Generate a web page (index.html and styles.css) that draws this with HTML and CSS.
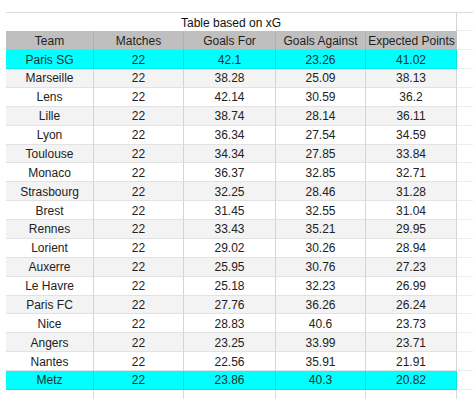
FILE: index.html
```html
<!DOCTYPE html>
<html>
<head>
<meta charset="utf-8">
<link rel="stylesheet" href="styles.css">
</head>
<body>
<div class="sheet">
  <div class="c title">Table based on xG</div><div class="c x top"></div>

  <div class="c h">Team</div><div class="c h">Matches</div><div class="c h">Goals For</div><div class="c h">Goals Against</div><div class="c h">Expected Points</div><div class="c x"></div>

  <div class="c hl">Paris SG</div><div class="c hl">22</div><div class="c hl">42.1</div><div class="c hl">23.26</div><div class="c hl">41.02</div><div class="c x"></div>
  <div class="c alt">Marseille</div><div class="c alt">22</div><div class="c alt">38.28</div><div class="c alt">25.09</div><div class="c alt">38.13</div><div class="c x"></div>
  <div class="c">Lens</div><div class="c">22</div><div class="c">42.14</div><div class="c">30.59</div><div class="c">36.2</div><div class="c x"></div>
  <div class="c alt">Lille</div><div class="c alt">22</div><div class="c alt">38.74</div><div class="c alt">28.14</div><div class="c alt">36.11</div><div class="c x"></div>
  <div class="c">Lyon</div><div class="c">22</div><div class="c">36.34</div><div class="c">27.54</div><div class="c">34.59</div><div class="c x"></div>
  <div class="c alt">Toulouse</div><div class="c alt">22</div><div class="c alt">34.34</div><div class="c alt">27.85</div><div class="c alt">33.84</div><div class="c x"></div>
  <div class="c">Monaco</div><div class="c">22</div><div class="c">36.37</div><div class="c">32.85</div><div class="c">32.71</div><div class="c x"></div>
  <div class="c alt">Strasbourg</div><div class="c alt">22</div><div class="c alt">32.25</div><div class="c alt">28.46</div><div class="c alt">31.28</div><div class="c x"></div>
  <div class="c">Brest</div><div class="c">22</div><div class="c">31.45</div><div class="c">32.55</div><div class="c">31.04</div><div class="c x"></div>
  <div class="c alt">Rennes</div><div class="c alt">22</div><div class="c alt">33.43</div><div class="c alt">35.21</div><div class="c alt">29.95</div><div class="c x"></div>
  <div class="c">Lorient</div><div class="c">22</div><div class="c">29.02</div><div class="c">30.26</div><div class="c">28.94</div><div class="c x"></div>
  <div class="c alt">Auxerre</div><div class="c alt">22</div><div class="c alt">25.95</div><div class="c alt">30.76</div><div class="c alt">27.23</div><div class="c x"></div>
  <div class="c">Le Havre</div><div class="c">22</div><div class="c">25.18</div><div class="c">32.23</div><div class="c">26.99</div><div class="c x"></div>
  <div class="c alt">Paris FC</div><div class="c alt">22</div><div class="c alt">27.76</div><div class="c alt">36.26</div><div class="c alt">26.24</div><div class="c x"></div>
  <div class="c">Nice</div><div class="c">22</div><div class="c">28.83</div><div class="c">40.6</div><div class="c">23.73</div><div class="c x"></div>
  <div class="c alt">Angers</div><div class="c alt">22</div><div class="c alt">23.25</div><div class="c alt">33.99</div><div class="c alt">23.71</div><div class="c x"></div>
  <div class="c">Nantes</div><div class="c">22</div><div class="c">22.56</div><div class="c">35.91</div><div class="c">21.91</div><div class="c x"></div>
  <div class="c hl">Metz</div><div class="c hl">22</div><div class="c hl">23.86</div><div class="c hl">40.3</div><div class="c hl">20.82</div><div class="c x"></div>

  <div class="e"></div><div class="e"></div><div class="e"></div><div class="e"></div><div class="e"></div><div class="e x"></div>
</div>
</body>
</html>
```

FILE: styles.css
```css
html, body {
  margin: 0;
  padding: 0;
  background: #ffffff;
}

.sheet {
  display: grid;
  grid-template-columns: 88px 90px 92px 90px 91px 16px;
  grid-template-rows: 19.3px repeat(19, 18.88px) 9px;
  margin: 12px 0 0 6px;
  font-family: "Liberation Sans", Arial, sans-serif;
  font-size: 12px;
  color: #222222;
}

.c {
  box-sizing: border-box;
  display: flex;
  align-items: center;
  justify-content: center;
  border-right: 1px solid #d4d4d4;
  border-bottom: 1px solid #e2e2e2;
  background: #ffffff;
  white-space: nowrap;
  padding-top: 1px;
}

.title {
  grid-column: 1 / span 5;
  border-top: 1px solid #dcdcdc;
  border-bottom: none;
  border-right: 1px solid #d4d4d4;
  color: #111111;
}

.top {
  border-top: 1px solid #dcdcdc;
}

.h {
  background: #bfbfbf;
  border-right: 1px solid #b0b0b0;
  border-bottom: 1px solid #b8b8b8;
  color: #1f1f1f;
}

.h:nth-child(7) {
  border-right: none;
}

.alt {
  background: #f3f3f3;
}

.hl {
  background: #00ffff;
  border-bottom-color: #00e8e8;
  border-right-color: #00e4e4;
  color: #173030;
}

.x {
  border-right: none;
  background: #ffffff;
  border-bottom: 1px solid #ececec;
}

.e {
  box-sizing: border-box;
  border-right: 1px solid #dadada;
}

.e.x {
  border: none;
}
```
